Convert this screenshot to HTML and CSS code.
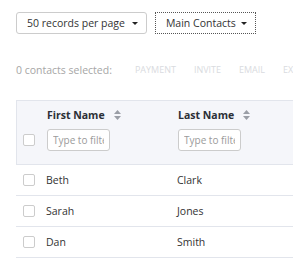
FILE: index.html
```html
<!DOCTYPE html>
<html lang="en">
<head>
  <meta charset="UTF-8" />
  <meta name="viewport" content="width=device-width, initial-scale=1.0" />
  <title>Contacts</title>
  <link rel="stylesheet" href="styles.css">
</head>
<body>
  <div class="page">
    <div class="toolbar">
      <button class="dropdown">50 records per page <span class="caret"></span></button>
      <button class="dropdown dropdown-focus">Main Contacts <span class="caret"></span></button>
    </div>

    <div class="bulk">
      <span class="bulk-label">0 contacts selected:</span>
      <span class="bulk-action">Payment</span>
      <span class="bulk-action">Invite</span>
      <span class="bulk-action">Email</span>
      <span class="bulk-action">Export</span>
    </div>

    <div class="grid">
      <div class="grid-head">
        <div class="cell cell-check"><span class="checkbox"></span></div>
        <div class="cell">
          <div class="col-title">First Name
            <svg class="sort" width="7" height="10" viewBox="0 0 7 10"><path d="M3.5 0L7 4H0z M3.5 10L0 6h7z" fill="#9a9ea6"/></svg>
          </div>
          <input class="filter" type="text" placeholder="Type to filter" />
        </div>
        <div class="cell">
          <div class="col-title">Last Name
            <svg class="sort" width="7" height="10" viewBox="0 0 7 10"><path d="M3.5 0L7 4H0z M3.5 10L0 6h7z" fill="#9a9ea6"/></svg>
          </div>
          <input class="filter" type="text" placeholder="Type to filter" />
        </div>
        <div class="cell"></div>
      </div>

      <div class="grid-row">
        <div class="cell cell-check"><span class="checkbox"></span></div>
        <div class="cell">Beth</div>
        <div class="cell">Clark</div>
        <div class="cell"></div>
      </div>
      <div class="grid-row">
        <div class="cell cell-check"><span class="checkbox"></span></div>
        <div class="cell">Sarah</div>
        <div class="cell">Jones</div>
        <div class="cell"></div>
      </div>
      <div class="grid-row">
        <div class="cell cell-check"><span class="checkbox"></span></div>
        <div class="cell">Dan</div>
        <div class="cell">Smith</div>
        <div class="cell"></div>
      </div>
    </div>
  </div>
</body>
</html>
```

FILE: styles.css
```css
body {
  margin: 0;
  font-family: "Open Sans", Arial, sans-serif;
  font-size: 10.5px;
  color: #333;
  background: #fff;
  overflow: hidden;
}
.page {
  padding: 12px 0 0 16px;
  width: 340px;
}
.toolbar {
  display: flex;
  gap: 8px;
}
.dropdown {
  display: flex;
  align-items: center;
  gap: 7px;
  height: 22px;
  padding: 0 8px 0 10px;
  border: 1px solid #ccc;
  border-radius: 3px;
  background: #fff;
  font-family: inherit;
  font-size: 10.5px;
  color: #333;
}
.dropdown-focus {
  border: 1px dotted #555;
  border-radius: 0;
  width: 101px;
  gap: 5px;
}
.caret {
  width: 0;
  height: 0;
  border-top: 3px solid #222;
  border-left: 3px solid transparent;
  border-right: 3px solid transparent;
}
.bulk {
  display: flex;
  align-items: center;
  margin-top: 29px;
  line-height: 14px;
}
.bulk-label {
  color: #a6a6a6;
  margin-right: 23px;
}
.bulk-action {
  font-size: 9px;
  text-transform: uppercase;
  color: #d9dbe0;
  margin-right: 18px;
}
.grid {
  margin-top: 23px;
}
.grid-head,
.grid-row {
  display: grid;
  grid-template-columns: 30px 131px 131px 1fr;
}
.grid-head {
  background: #f5f6fa;
  border: 1px solid #e2e5ec;
  border-right: none;
  padding: 7px 0 13px;
}
.grid-row {
  height: 30px;
  align-items: center;
  border-bottom: 1px solid #e2e5ec;
}
.cell-check {
  padding-left: 6px;
}
.grid-head .cell-check {
  align-self: end;
  padding-bottom: 5px;
  padding-left: 6px;
}
.grid-row .cell-check {
  padding-left: 7px;
}
.checkbox {
  display: block;
  width: 10px;
  height: 10px;
  border: 1px solid #ccc;
  border-radius: 2px;
  background: #fff;
}
.col-title {
  display: flex;
  align-items: center;
  gap: 9px;
  font-weight: 700;
  color: #2b2f36;
  line-height: 14px;
}
.filter {
  display: block;
  box-sizing: border-box;
  width: 63px;
  height: 22px;
  margin-top: 7px;
  padding: 0 5px;
  border: 1px solid #ccc;
  border-radius: 3px;
  font-family: inherit;
  font-size: 10px;
  color: #333;
}
.filter::placeholder {
  color: #9a9a9a;
}
```
